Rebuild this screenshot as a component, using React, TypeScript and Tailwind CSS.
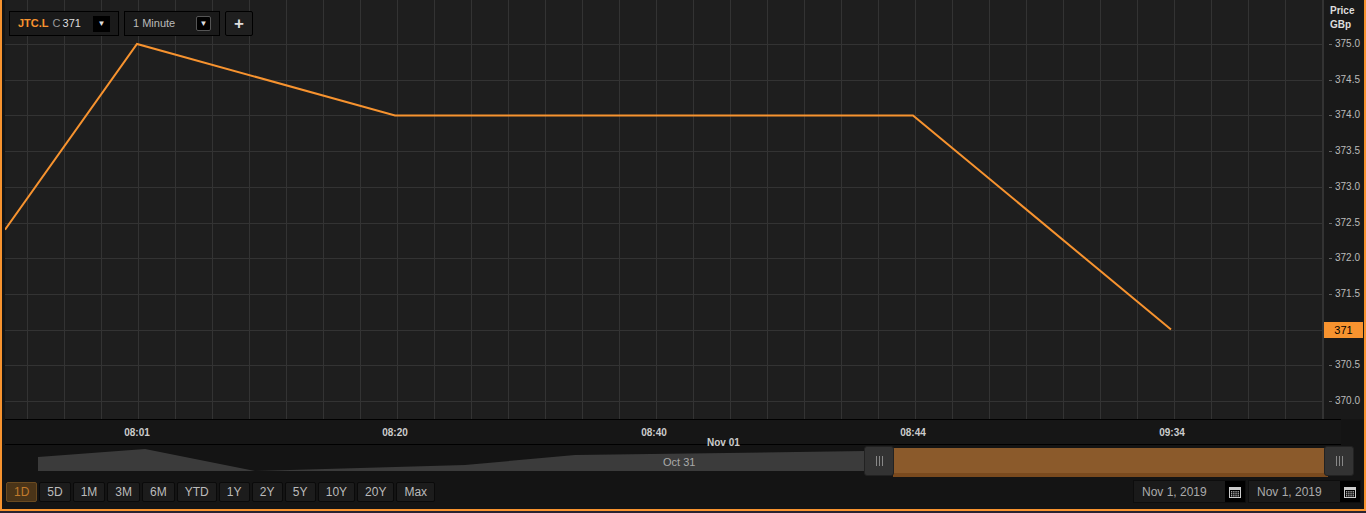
import React from "react";

const W = 1318;
const H = 419;
const yOf = (v: number) => 401 - (v - 370) * 71.4;

function Chart() {
  const vx: number[] = [];
  for (let x = 1317; x > 0; x -= 37) vx.push(x);
  const hy: number[] = [];
  for (let k = -1; k <= 10; k++) hy.push(401 - k * 35.7);
  const pts = [
    [0, yOf(372.4)],
    [132, yOf(375)],
    [390, yOf(374)],
    [908, yOf(374)],
    [1166, yOf(371)],
  ];
  return (
    <svg width={W} height={H} className="block">
      <rect width={W} height={H} fill="#1e1e1e" />
      {vx.map((x) => (
        <line key={x} x1={x + 0.5} x2={x + 0.5} y1={0} y2={H} stroke="#333" />
      ))}
      {hy.map((y) => (
        <line key={y} x1={0} x2={W} y1={Math.round(y) + 0.5} y2={Math.round(y) + 0.5} stroke="#333" />
      ))}
      <polyline points={pts.map((p) => p.join(",")).join(" ")} fill="none" stroke="#f7932f" strokeWidth={2} />
    </svg>
  );
}

const labels = ["375.0", "374.5", "374.0", "373.5", "373.0", "372.5", "372.0", "371.5", "", "370.5", "370.0"];

export default function App() {
  const ranges = ["1D", "5D", "1M", "3M", "6M", "YTD", "1Y", "2Y", "5Y", "10Y", "20Y", "Max"];
  return (
    <div className="w-[1366px] h-[513px] bg-[#2a2430] overflow-hidden" style={{ fontFamily: "'Liberation Sans', Arial, sans-serif" }}>
      <div className="h-[511px] bg-[#141414] border-l-2 border-r-2 border-b-2 border-[#f7932f] flex flex-col relative">
        <div className="flex h-[419px] pl-[3px]">
          <div className="relative">
            <Chart />
            <div className="absolute left-[4px] top-[11px] flex gap-[5px] items-start">
              <div className="h-[25px] w-[110px] bg-[#1a1a1a] border border-black flex items-center px-[8px] text-[11px]">
                <span className="text-[#f7932f] font-bold">JTC.L</span>
                <span className="text-[#999] ml-[4px]">C</span>
                <span className="text-[#ddd] ml-[2px]">371</span>
                <span className="ml-auto w-[17px] h-[16px] bg-black text-[#ddd] text-[8px] flex items-center justify-center">▼</span>
              </div>
              <div className="h-[25px] w-[96px] bg-[#1a1a1a] border border-black flex items-center px-[8px] text-[11px]">
                <span className="text-[#bbb]">1 Minute</span>
                <span className="ml-auto w-[15px] h-[15px] bg-black border border-[#555] rounded-[2px] text-[#ddd] text-[8px] flex items-center justify-center">▼</span>
              </div>
              <div className="h-[25px] w-[28px] bg-[#1f1f1f] border border-black rounded-[2px] flex items-center justify-center text-[#ddd] text-[17px] font-bold leading-none">+</div>
            </div>
          </div>
          <div className="flex-1 bg-[#191919] relative border-l border-[#333]">
            <div className="absolute left-[6px] top-[4px] text-[10px] font-bold text-[#ddd] leading-[14px]">Price<br />GBp</div>
            {labels.map((l, i) =>
              l ? (
                <div key={l} className="absolute left-[5px] text-[10px] text-[#bbb] leading-none flex items-center gap-[3px]" style={{ top: Math.round(44 + i * 35.7) - 5 }}>
                  <span className="w-[3px] h-px bg-[#666]" />{l}
                </div>
              ) : null
            )}
            <div className="absolute left-0 top-[322px] w-[39px] h-[16px] bg-[#f7932f] text-black text-[11px] flex items-center justify-center">371</div>
          </div>
        </div>
        <div className="h-[26px] mx-[3px] mr-[23px] border-t border-b border-black bg-[#161616] relative text-[10px] font-bold text-[#ccc]">
          {[["08:01", 137], ["08:20", 395], ["08:40", 654], ["08:44", 913], ["09:34", 1172]].map(([t, x]) => (
            <span key={t as string} className="absolute top-[5px] -translate-x-1/2" style={{ left: (x as number) - 5 }}>{t}</span>
          ))}
          <span className="absolute top-[15px] left-[702px] text-[10px]">Nov 01</span>
        </div>
        <div className="h-[33px] mx-[3px] relative">
          <svg width={1330} height={33} className="absolute left-0 top-0">
            <polygon points="33,12 140,4 250,26 460,20 570,10 860,6 1325,6 1325,26 33,26" fill="#3b3b3b" />
            <rect x="888" y="3" width="435" height="29" fill="#8b5a2b" />
            <rect x="888" y="28" width="435" height="4" fill="#7a4a1e" />
          </svg>
          <span className="absolute left-[658px] top-[9px] text-[11px] text-[#aaa]">Oct 31</span>
          {[859, 1319].map((x) => (
            <div key={x} className="absolute top-[1px] w-[30px] h-[30px] bg-[#333] border border-[#222] rounded-[3px] flex items-center justify-center gap-[2px]" style={{ left: x }}>
              <span className="w-px h-[10px] bg-[#888]" /><span className="w-px h-[10px] bg-[#888]" /><span className="w-px h-[10px] bg-[#888]" />
            </div>
          ))}
        </div>
        <div className="flex items-center mt-[2px] ml-[4px] gap-[2px] text-[12px]">
          {ranges.map((r, i) => (
            <div key={r} className={`h-[20px] px-[7px] min-w-[31px] justify-center flex items-center rounded-[2px] border ${i === 0 ? "bg-[#4a3418] text-[#c17a2c] border-[#6a4a20]" : "bg-[#1c1c1c] text-[#bbb] border-[#0a0a0a]"}`}>{r}</div>
          ))}
          <div className="ml-auto mr-[3px] flex gap-[2px]">
            {[0, 1].map((k) => (
              <div key={k} className="h-[23px] w-[113px] bg-[#1a1a1a] border border-[#0d0d0d] flex items-center pl-[8px] text-[12px] text-[#aaa]">
                Nov 1, 2019
                <span className="ml-auto w-[20px] h-[21px] bg-black flex items-center justify-center">
                  <svg width="12" height="12" viewBox="0 0 12 12"><rect x="0.5" y="1.5" width="11" height="10" fill="none" stroke="#ccc" /><rect x="1" y="2" width="10" height="2" fill="#ccc" />{[0,1,2].map(r=>[0,1,2,3].map(c=><rect key={`${r}${c}`} x={2+c*2.2} y={5.2+r*2} width="1.3" height="1.2" fill="#ccc"/>))}</svg>
                </span>
              </div>
            ))}
          </div>
        </div>
      </div>
    </div>
  );
}
